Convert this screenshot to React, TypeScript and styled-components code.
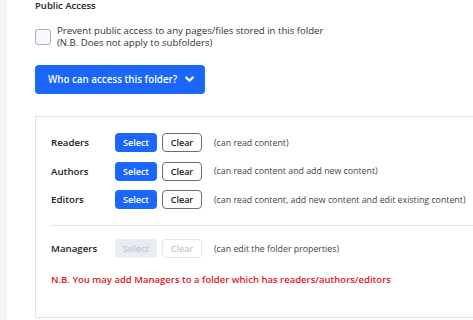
import React from "react";
import styled, { createGlobalStyle } from "styled-components";

const Global = createGlobalStyle`
  html, body { margin: 0; padding: 0; background: #fff; }
  body { font-family: "Open Sans", "Noto Sans", sans-serif; color: #222; }
  * { box-sizing: border-box; }
`;

const Page = styled.div`
  display: flex;
  width: 473px;
  height: 320px;
  overflow: hidden;
`;

const Strip = styled.div`
  width: 7px;
  flex: none;
  background: #f3f4f8;
`;

const Content = styled.div`
  flex: 1;
  padding-left: 28px;
  display: flex;
  flex-direction: column;
  min-width: 0;
`;

const Heading = styled.div`
  font-size: 9.5px;
  font-weight: 600;
  line-height: 12px;
  color: #222;
`;

const CheckRow = styled.label`
  display: flex;
  align-items: flex-start;
  gap: 6px;
  margin-top: 13px;
`;

const Box = styled.span`
  width: 16px;
  height: 16px;
  flex: none;
  border: 1px solid #a9adb5;
  border-radius: 3px;
  background: #f7f8fb;
  margin-top: 4px;
`;

const CheckText = styled.div`
  font-size: 9.6px;
  line-height: 12px;
  color: #333;
  white-space: nowrap;
`;

const Toggle = styled.button`
  margin-top: 16px;
  width: 170px;
  height: 29px;
  border: none;
  border-radius: 4px;
  background: #1b66fb;
  color: #fff;
  font-family: inherit;
  font-size: 9.8px;
  font-weight: 600;
  display: flex;
  align-items: center;
  padding: 0 0 0 13px;
  gap: 8px;
`;

const Panel = styled.div`
  margin-top: 22px;
  width: 460px;
  height: 202px;
  border: 1px solid #e2e2e5;
  border-right: none;
  padding: 16px 0 0 15px;
  display: flex;
  flex-direction: column;
`;

const Row = styled.div<{ $top?: number }>`
  display: flex;
  align-items: center;
  height: 19px;
  margin-top: ${(p) => p.$top ?? 0}px;
`;

const Label = styled.div`
  width: 64px;
  font-size: 9.7px;
  font-weight: 600;
  color: #222;
`;

const SelectBtn = styled.button<{ $disabled?: boolean }>`
  width: 42px;
  height: 19px;
  border: none;
  border-radius: 4px;
  background: ${(p) => (p.$disabled ? "#e9ecf3" : "#1b66fb")};
  color: ${(p) => (p.$disabled ? "#c3c8d2" : "#fff")};
  font-family: inherit;
  font-size: 9px;
  font-weight: 600;
  padding: 0;
`;

const ClearBtn = styled.button<{ $disabled?: boolean }>`
  margin-left: 5px;
  width: 40px;
  height: 19px;
  border: 1px solid ${(p) => (p.$disabled ? "#e3e6ec" : "#6b6d72")};
  border-radius: 4px;
  background: #fff;
  color: ${(p) => (p.$disabled ? "#c3c8d2" : "#222")};
  font-family: inherit;
  font-size: 9px;
  font-weight: 600;
  padding: 0;
`;

const Desc = styled.div`
  margin-left: 12px;
  font-size: 8.8px;
  color: #444;
  white-space: nowrap;
`;

const Divider = styled.div`
  height: 1px;
  background: #e2e2e5;
  margin-top: 16px;
`;

const Warning = styled.div`
  margin-top: 15px;
  font-size: 9.5px;
  font-weight: 600;
  color: #e3141b;
  white-space: nowrap;
`;

const Chevron = () => (
  <svg width="9" height="7" viewBox="0 0 9 7">
    <path d="M1.2 1.5 L4.5 4.8 L7.8 1.5" stroke="#fff" strokeWidth="2.2" fill="none" strokeLinecap="round" strokeLinejoin="round" />
  </svg>
);

const rows = [
  { label: "Readers", desc: "(can read content)" },
  { label: "Authors", desc: "(can read content and add new content)" },
  { label: "Editors", desc: "(can read content, add new content and edit existing content)" },
];

export default function App() {
  return (
    <Page>
      <Global />
      <Strip />
      <Content>
        <Heading>Public Access</Heading>
        <CheckRow>
          <Box />
          <CheckText>
            Prevent public access to any pages/files stored in this folder
            <br />
            (N.B. Does not apply to subfolders)
          </CheckText>
        </CheckRow>
        <Toggle>
          Who can access this folder? <Chevron />
        </Toggle>
        <Panel>
          {rows.map((r, i) => (
            <Row key={r.label} $top={i === 0 ? 0 : 9.5}>
              <Label>{r.label}</Label>
              <SelectBtn>Select</SelectBtn>
              <ClearBtn>Clear</ClearBtn>
              <Desc>{r.desc}</Desc>
            </Row>
          ))}
          <Divider />
          <Row $top={13}>
            <Label>Managers</Label>
            <SelectBtn $disabled>Select</SelectBtn>
            <ClearBtn $disabled>Clear</ClearBtn>
            <Desc>(can edit the folder properties)</Desc>
          </Row>
          <Warning>N.B. You may add Managers to a folder which has readers/authors/editors</Warning>
        </Panel>
      </Content>
    </Page>
  );
}
